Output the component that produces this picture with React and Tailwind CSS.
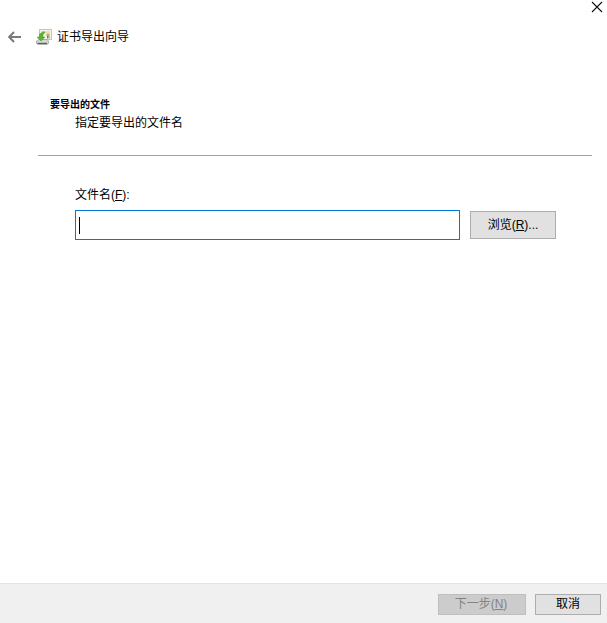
import React from "react";

function CertIcon() {
    return (
        <svg width="16" height="16" viewBox="0 0 16 16" className="shrink-0">
            <rect x="3.500" y="0.500" width="12" height="10" fill="#f6f3e6" stroke="#c9c5b4" />
            <rect x="5" y="2" width="9" height="2" fill="#e4e0cf" />
            <path d="M10.500 4.500h3v2.500h-3z" fill="#e3a21f" />
            <path d="M11 7h.9v2.500H11zM12.500 7h.9v2.500h-.9z" fill="#3f70b5" />
            <path d="M0.500 12 3 10.500h8l1.500 1.500v2.500L11 15.500H2L0.500 14.500z" fill="#d4d6d4" stroke="#8b908d" strokeWidth="0.600" />
            <path d="M1.500 13.800h9.500v1.200H1.500z" fill="#5a6063" />
            <path d="M8 2.500 9 3.500 7 5.500V8h2L5 12 1 8h2.500V5z" fill="#58b42e" stroke="#3c8d1d" strokeWidth="0.400" />
        </svg>
    );
}

export default function App() {
    return (
        <div className="w-[607px] h-[623px] flex flex-col bg-white font-['Liberation_Sans','Noto_Sans_CJK_SC',sans-serif] text-[12px] text-black overflow-hidden">
            <div className="flex justify-end h-[12px] pr-[4px]">
                <svg width="12" height="12" viewBox="0 0 12 12" className="mt-[1px]">
                    <path d="M1 1 11 11M11 1 1 11" stroke="#111" strokeWidth="1.100" fill="none" />
                </svg>
            </div>

            <div className="flex items-center h-[28px] mt-[11px] pl-[8px]">
                <svg width="13" height="12" viewBox="0 0 13 12">
                    <path d="M6 1 1.200 6 6 11M1.500 6H13" stroke="#7a7a7a" strokeWidth="2" fill="none" />
                </svg>
                <div className="ml-[15px]"><CertIcon /></div>
                <span className="ml-[5px] text-[12px] leading-[16px]">证书导出向导</span>
            </div>

            <div className="pl-[50px] mt-[47px] text-[10px] font-bold leading-[14px]">要导出的文件</div>
            <div className="pl-[75px] mt-[3px] text-[12px] leading-[16px]">指定要导出的文件名</div>
            <div className="mx-[38px] mt-[24px] mr-[15px] h-px bg-[#a0a0a0]"></div>

            <div className="pl-[75px] mt-[31px] text-[12px] leading-[16px]">
                文件名(<span className="underline">F</span>):
            </div>
            <div className="flex items-center pl-[75px] mt-[7px]">
                <div className="w-[385px] h-[30px] border border-[#0078d7] flex items-center pl-[3px]">
                    <div className="w-px h-[17px] bg-black"></div>
                </div>
                <button className="ml-[10px] w-[86px] h-[28px] bg-[#e1e1e1] border border-[#adadad] text-[12px]">
                    浏览(<span className="underline">R</span>)...
                </button>
            </div>

            <div className="flex-1"></div>

            <div className="h-[40px] bg-[#f0f0f0] border-t border-[#e3e3e3] flex items-center justify-end pr-[6px] pt-[1px]">
                <button className="w-[88px] h-[21px] bg-[#cccccc] border border-[#bfbfbf] text-[#838383] text-[12px] pr-[2px]">
                    下一步(<span className="underline">N</span>)
                </button>
                <button className="ml-[9px] w-[66px] h-[21px] bg-[#e1e1e1] border border-[#adadad] text-[12px]">取消</button>
            </div>
        </div>
    );
}
